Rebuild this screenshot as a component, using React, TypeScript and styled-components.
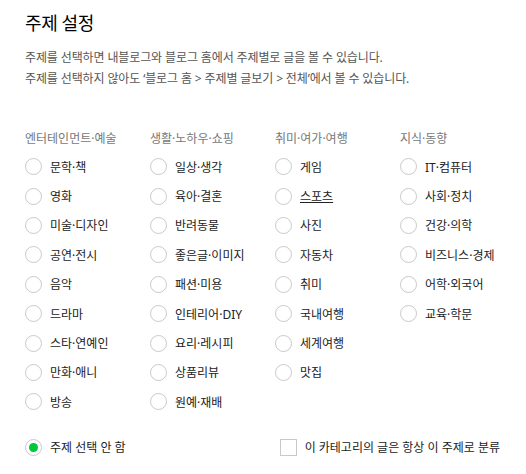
import React from "react";
import styled, { createGlobalStyle } from "styled-components";

const GlobalStyle = createGlobalStyle`
  html, body {
    margin: 0;
    padding: 0;
    background: #fff;
  }
  body {
    font-family: "Noto Sans", "Noto Sans CJK KR", sans-serif;
    color: #333;
  }
`;

// topic groups, one column each
const groups: { title: string; items: string[] }[] = [
  {
    title: "엔터테인먼트·예술",
    items: ["문학·책", "영화", "미술·디자인", "공연·전시", "음악", "드라마", "스타·연예인", "만화·애니", "방송"],
  },
  {
    title: "생활·노하우·쇼핑",
    items: ["일상·생각", "육아·결혼", "반려동물", "좋은글·이미지", "패션·미용", "인테리어·DIY", "요리·레시피", "상품리뷰", "원예·재배"],
  },
  {
    title: "취미·여가·여행",
    items: ["게임", "스포츠", "사진", "자동차", "취미", "국내여행", "세계여행", "맛집"],
  },
  {
    title: "지식·동향",
    items: ["IT·컴퓨터", "사회·정치", "건강·의학", "비즈니스·경제", "어학·외국어", "교육·학문"],
  },
];

const App: React.FC = () => {
  return (
    <>
      <GlobalStyle />
      <Panel>
        <Title>주제 설정</Title>
        <Description>
          <p>주제를 선택하면 내블로그와 블로그 홈에서 주제별로 글을 볼 수 있습니다.</p>
          <p>주제를 선택하지 않아도 ‘블로그 홈 &gt; 주제별 글보기 &gt; 전체’에서 볼 수 있습니다.</p>
        </Description>

        <Columns>
          {groups.map((group) => (
            <Column key={group.title}>
              <GroupTitle>{group.title}</GroupTitle>
              {group.items.map((item) => (
                <Option key={item}>
                  <Radio />
                  <OptionLabel $hovered={item === "스포츠"}>{item}</OptionLabel>
                </Option>
              ))}
            </Column>
          ))}
        </Columns>

        <Footer>
          <Option>
            <Radio $checked />
            <OptionLabel>주제 선택 안 함</OptionLabel>
          </Option>
          <CheckOption>
            <CheckBox />
            <CheckLabel>이 카테고리의 글은 항상 이 주제로 분류</CheckLabel>
          </CheckOption>
        </Footer>
      </Panel>
    </>
  );
};

const Panel = styled.div`
  width: 526px;
  box-sizing: border-box;
  padding: 10px 0 0 25px;
`;

const Title = styled.h2`
  margin: 0;
  font-size: 18px;
  font-weight: 400;
  color: #000;
  line-height: 26px;
  letter-spacing: -0.4px;
`;

const Description = styled.div`
  margin-top: 11px;
  font-size: 12px;
  color: #555;
  letter-spacing: -0.12px;

  p {
    margin: 0;
    line-height: 21px;
  }
`;

const Columns = styled.div`
  display: grid;
  grid-template-columns: repeat(4, 125px);
  margin-top: 41px;
`;

const Column = styled.div`
  display: flex;
  flex-direction: column;
`;

const GroupTitle = styled.div`
  font-size: 12px;
  color: #777;
  line-height: 18px;
  margin-bottom: 4px;
`;

const Option = styled.label`
  display: flex;
  align-items: center;
  gap: 8px;
  height: 29.4px;
  cursor: pointer;
`;

const Radio = styled.span<{ $checked?: boolean }>`
  position: relative;
  flex: none;
  width: 17px;
  height: 17px;
  box-sizing: border-box;
  border: 1px solid #c9c9c9;
  border-radius: 50%;
  background: #fff;

  &::after {
    content: "";
    display: ${(p) => (p.$checked ? "block" : "none")};
    position: absolute;
    top: 3px;
    left: 3px;
    width: 9px;
    height: 9px;
    border-radius: 50%;
    background: #00c73c;
  }
`;

const OptionLabel = styled.span<{ $hovered?: boolean }>`
  font-size: 12px;
  color: #222;
  text-decoration: ${(p) => (p.$hovered ? "underline" : "none")};
`;

const Footer = styled.div`
  display: flex;
  align-items: center;
  justify-content: space-between;
  width: 475px;
  margin-top: 16px;
`;

const CheckOption = styled.label`
  display: flex;
  align-items: center;
  gap: 8px;
  cursor: pointer;
`;

const CheckBox = styled.span`
  flex: none;
  width: 17px;
  height: 17px;
  box-sizing: border-box;
  border: 1px solid #c9c9c9;
  background: #fff;
`;

const CheckLabel = styled.span`
  font-size: 12px;
  color: #222;
`;

export default App;
